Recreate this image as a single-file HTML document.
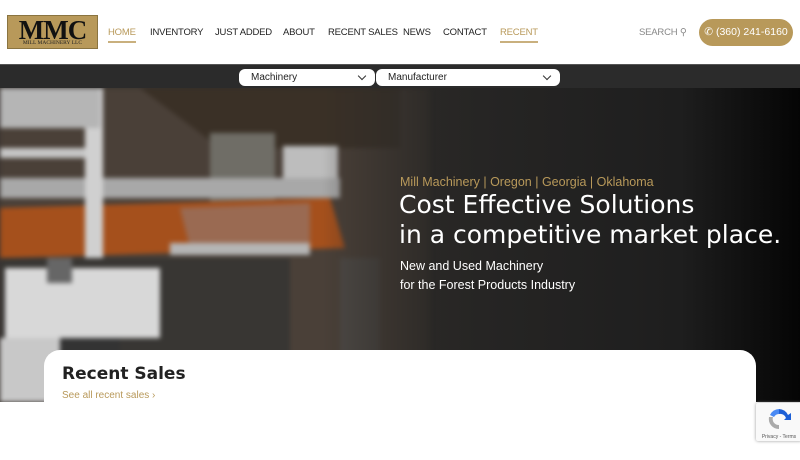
<!DOCTYPE html>
<html><head><meta charset="utf-8"><style>
*{margin:0;padding:0;box-sizing:border-box}
body{width:800px;height:450px;overflow:hidden;background:#fff;font-family:"Liberation Sans",sans-serif;position:relative}
.hdr{position:absolute;left:0;top:0;width:800px;height:64px;background:#fff}
.logo{position:absolute;left:7px;top:15px;width:91px;height:34px;background:#b8995a;border:1px solid #8a7440;overflow:hidden}
.logo .m{position:absolute;left:0;width:100%;top:-1px;text-align:center;font-family:"Liberation Serif",serif;font-weight:bold;font-size:27px;color:#111;letter-spacing:-1px}
.logo .s{position:absolute;left:0;width:100%;top:24px;text-align:center;font-family:"Liberation Serif",serif;font-size:5.5px;color:#222}
.nav a{position:absolute;top:27px;font-size:9.5px;color:#222;text-decoration:none;white-space:nowrap;letter-spacing:-0.2px}
.nav a.g{color:#b8995a}
.nav a.u{border-bottom:2px solid #c9b07e;padding-bottom:3px}
.phone{position:absolute;left:699px;top:19px;width:94px;height:27px;border-radius:14px;background:#b8995a;color:#fff;font-size:10.5px;text-align:center;line-height:27px}
.bar{position:absolute;left:0;top:64px;width:800px;height:24px;background:#2b2b2b;border-top:1px solid #555}
.sel{position:absolute;top:4px;height:17px;background:#fff;border-radius:6px;font-size:10px;line-height:17px;padding-left:12px;color:#222}
.sel:after{content:"";position:absolute;right:10px;top:4px;width:5px;height:5px;border-right:1.3px solid #333;border-bottom:1.3px solid #333;transform:rotate(45deg)}
.hero{position:absolute;left:0;top:88px;width:800px;height:314px;background:linear-gradient(90deg,#3a3430 0%,#2e2b28 45%,#262524 60%,#1e1e1e 85%,#050505 100%);overflow:hidden}
.card{position:absolute;left:44px;top:350px;width:712px;height:110px;background:#fff;border-radius:16px 16px 0 0}
h2{position:absolute;left:62px;top:364px;font-family:"DejaVu Sans",sans-serif;font-size:17px;color:#222;font-weight:bold}
.see{position:absolute;left:62px;top:390px;font-size:10px;color:#b8995a}
.cap{position:absolute;left:756px;top:403px;width:46px;height:38px;background:#f9f9f9;box-shadow:0 0 3px #999;border-radius:2px}
</style></head><body>
<div class="hdr">
<div class="logo"><div class="m">MMC</div><div class="s">MILL MACHINERY LLC</div></div>
<div class="nav">
<a class="g u" style="left:108px">HOME</a>
<a style="left:150px">INVENTORY</a>
<a style="left:215px">JUST ADDED</a>
<a style="left:283px">ABOUT</a>
<a style="left:328px">RECENT SALES</a>
<a style="left:403px">NEWS</a>
<a style="left:443px">CONTACT</a>
<a class="g u" style="left:500px">RECENT</a>
<a style="left:639px;color:#888">SEARCH &#9906;</a>
</div>
<div class="phone">&#9990; (360) 241-6160</div>
</div>
<div class="bar">
<div class="sel" style="left:239px;width:136px">Machinery</div>
<div class="sel" style="left:376px;width:184px">Manufacturer</div>
</div>
<div class="hero">
<svg width="430" height="314" style="position:absolute;left:0;top:0;filter:blur(2.5px)">
<defs><linearGradient id="f" x1="0" x2="1"><stop offset="0.75" stop-color="#2e2b28" stop-opacity="0"/><stop offset="1" stop-color="#2e2b28" stop-opacity="1"/></linearGradient></defs>
<rect width="430" height="314" fill="#4a4038"/>
<polygon points="140,0 400,0 400,60 220,60" fill="#3a3026"/>
<rect x="210" y="45" width="65" height="75" fill="#6f6d66"/>
<rect x="283" y="58" width="55" height="50" fill="#bdbdbd"/>
<rect x="0" y="90" width="340" height="20" fill="#a8a8a8"/>
<polygon points="0,120 330,110 345,160 0,170" fill="#a5501c"/>
<polygon points="180,120 310,115 310,155 190,160" fill="#9a6a52"/>
<rect x="0" y="170" width="290" height="110" fill="#383633"/>
<rect x="85" y="0" width="18" height="170" fill="#d0d0d0"/>
<rect x="0" y="0" width="100" height="40" fill="#b5b5b5"/>
<rect x="0" y="60" width="85" height="10" fill="#c5c5c5"/>
<rect x="170" y="155" width="140" height="12" fill="#b5b5b5"/>
<rect x="5" y="180" width="155" height="70" fill="#d8d8d8"/>
<rect x="47" y="170" width="25" height="25" fill="#666"/>
<rect x="0" y="250" width="60" height="64" fill="#c8c8c8"/>
<rect x="60" y="250" width="60" height="25" fill="#333"/>
<rect x="340" y="170" width="40" height="144" fill="#4e4a46"/>
<rect width="430" height="314" fill="url(#f)"/>
</svg>
<div style="position:absolute;left:400px;top:87px;font-size:12.5px;color:#b8995a">Mill Machinery | Oregon | Georgia | Oklahoma</div>
<div style="position:absolute;left:399px;top:102px;font-family:'DejaVu Sans',sans-serif;font-size:25px;line-height:30px;color:#fff;white-space:nowrap">Cost Effective Solutions<br>in a competitive market place.</div>
<div style="position:absolute;left:400px;top:169px;font-size:12.5px;line-height:19px;color:#fff">New and Used Machinery<br>for the Forest Products Industry</div>
</div>
<div class="card"></div>
<h2>Recent Sales</h2>
<div class="see">See all recent sales &rsaquo;</div>
<div class="cap">
<svg width="46" height="38"><path d="M23 6a10 10 0 0 1 9 6l3-2v7h-7l2-2a6 6 0 0 0-7-4z" fill="#1c5fd6"/><path d="M14 12a10 10 0 0 1 9-6v5a6 6 0 0 0-5 3z" fill="#4a8af4"/><path d="M13 14a10 10 0 0 0 10 12v-4a6 6 0 0 1-6-8z" fill="#aaa"/><text x="23" y="35" font-size="5" text-anchor="middle" fill="#555" font-family="Liberation Sans">Privacy - Terms</text></svg>
</div>
</body></html>
